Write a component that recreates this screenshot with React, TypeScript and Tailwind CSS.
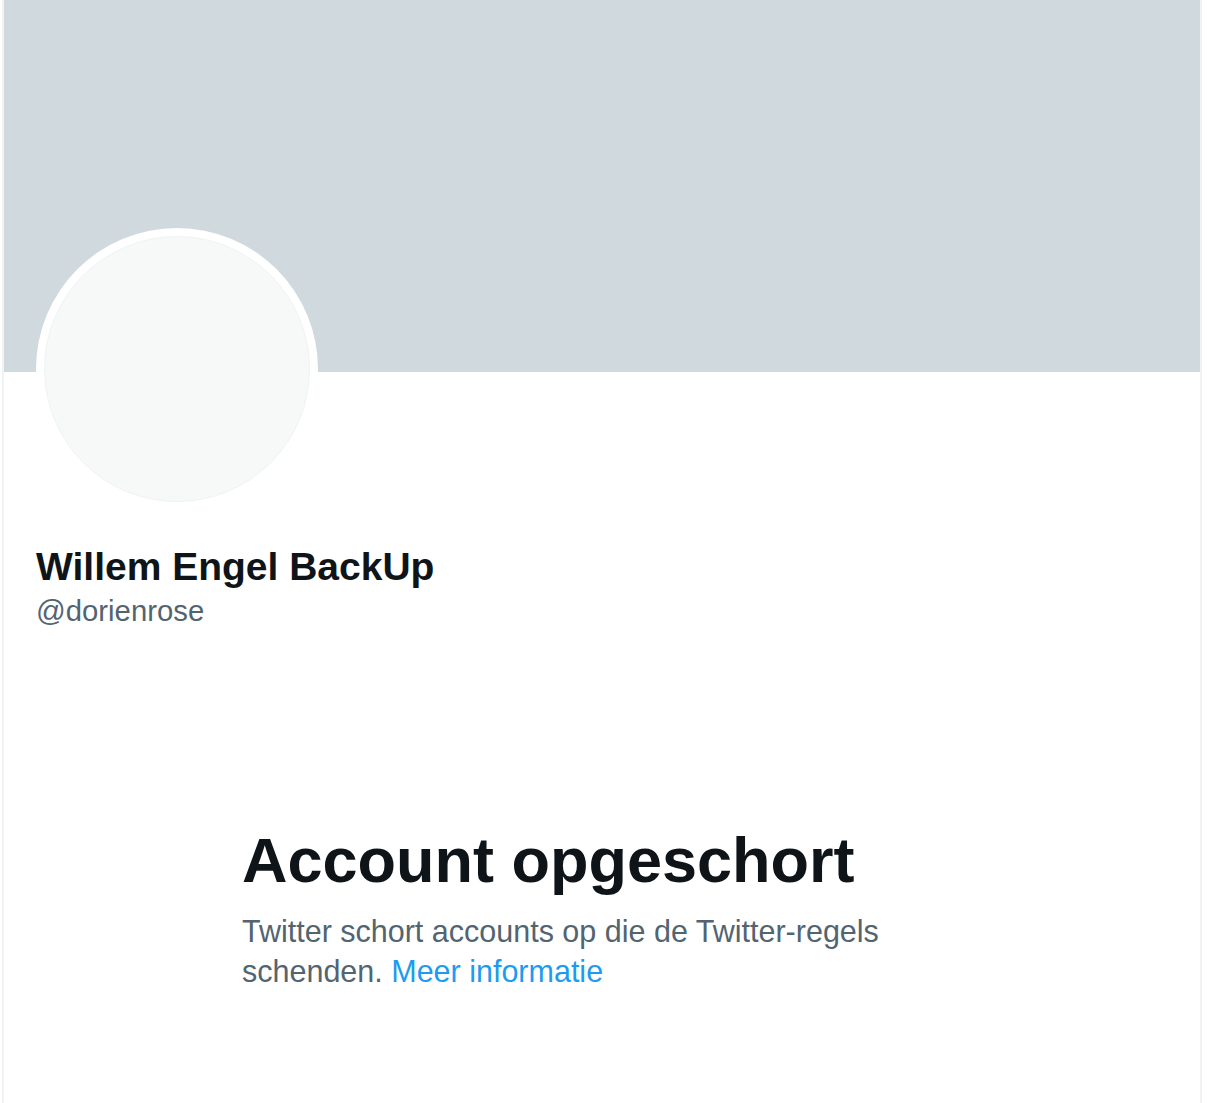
import React from "react";

export default function App() {
  return (
    <div className="min-h-[1103px] bg-white" style={{ fontFamily: '"Liberation Sans", Arial, sans-serif' }}>
      <div className="ml-[2px] w-[1200px] min-h-[1103px] border-x-2 border-[#eff3f4]">
        <div className="h-[372px] bg-[#cfd9de]" />
        <div className="px-[32px]">
          <div className="-mt-[144px] h-[282px] w-[282px] rounded-full bg-white p-[8px]">
            <div className="h-full w-full rounded-full border border-[#eff3f4] bg-[#f7f9f9]" />
          </div>
          <div className="mt-[33px]">
            <div className="text-[39px] font-bold leading-[48px] text-[#0f1419]">Willem Engel BackUp</div>
            <div className="text-[29.3px] leading-[40px] text-[#536471]">@dorienrose</div>
          </div>
        </div>
        <div className="pl-[238px] pt-[193px]">
          <div className="max-w-[680px]">
            <h1 className="text-[63px] font-bold leading-[72px] text-[#0f1419]">Account opgeschort</h1>
            <p className="mt-[15px] text-[30.5px] leading-[40px] text-[#536471]">
              Twitter schort accounts op die de Twitter-regels schenden.{" "}
              <span className="text-[#1d9bf0]">Meer informatie</span>
            </p>
          </div>
        </div>
      </div>
    </div>
  );
}
